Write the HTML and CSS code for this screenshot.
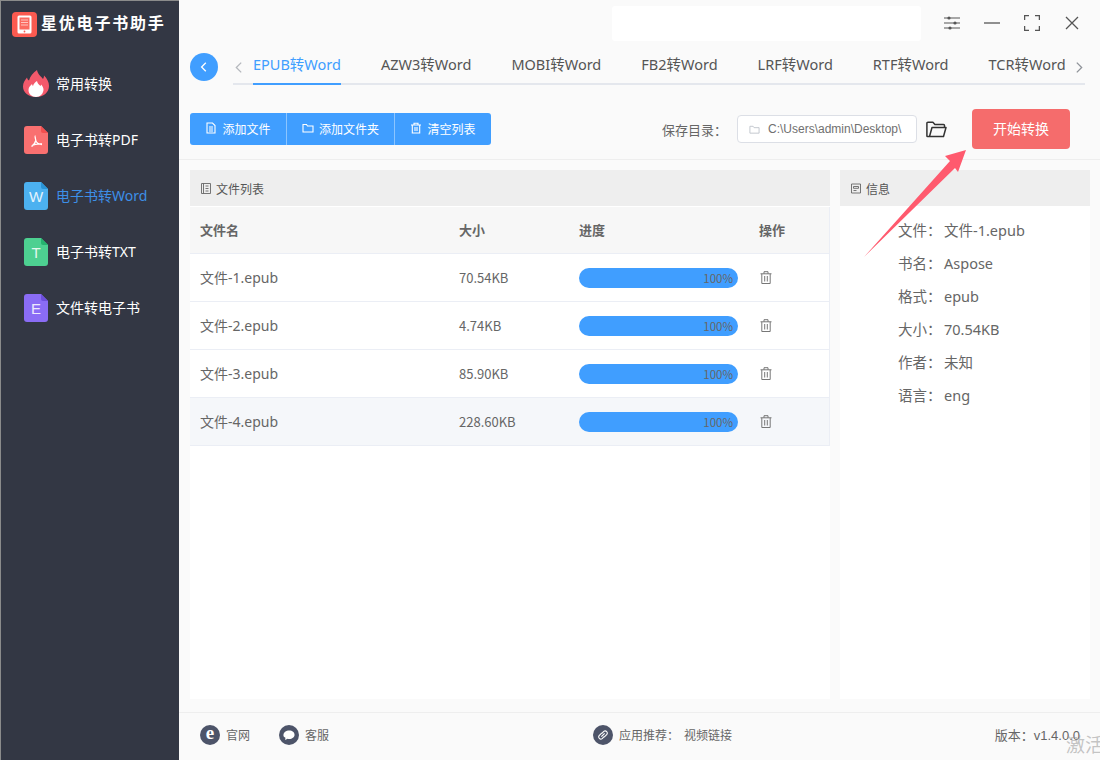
FILE: index.html
```html
<!DOCTYPE html>
<html lang="zh-CN">
  <head>
    <meta charset="UTF-8" />
    <title>星优电子书助手</title>
    <link rel="stylesheet" href="styles.css">
  </head>
  <body>
    <div class="app">
      <aside class="sidebar">
        <div class="brand">
          <svg class="brand-logo" viewBox="0 0 25 25">
            <rect width="25" height="25" rx="4" fill="#fb5a50" />
            <rect x="5.500" y="3.500" width="14" height="18" rx="1.500" fill="#fff" />
            <rect x="7.500" y="5.500" width="10" height="12" fill="#fb6a60" />
            <path d="M9 8h7M9 10.500h7M9 13h7" stroke="#ffc4bf" stroke-width="1.200" />
            <circle cx="12.500" cy="19.500" r="0.900" fill="#fb5a50" />
          </svg>
          <span class="brand-name">星优电子书助手</span>
        </div>
        <nav class="side-nav">
          <a class="side-item">
            <svg class="side-icon" viewBox="0 0 26 28">
              <path d="M14 0c1 5 4 6 6 9 .6-1 1-2 1-3.500 3 3 5 6.500 5 10.500 0 6.500-5.500 11-13 11S0 22.500 0 16.500c0-4 2-6.500 4-9 .3 1.500 1 2.500 2 3C7 6 10 3 14 0z" fill="#f4596b" />
              <path d="M14 11c.5 2.500 2 3.500 3.500 5 .4-.6.6-1 .7-1.600 1.300 1.500 2.300 3.200 2.300 5.100 0 4-3.300 7.500-7.500 7.500S5.500 24 5.500 20c0-3 2-4.500 3.500-6 .2 1 .5 1.500 1 2 .5-2 2-3.800 4-5z" fill="#fff" />
            </svg>
            <span>常用转换</span>
          </a>
          <a class="side-item">
            <span class="doc-icon">
              <svg viewBox="0 0 24 28">
                <path d="M3 0h14l7 7v18a3 3 0 0 1-3 3H3a3 3 0 0 1-3-3V3a3 3 0 0 1 3-3z" fill="#f97070" />
                <path d="M17 0l7 7h-5a2 2 0 0 1-2-2z" fill="#f24f4f" />
                <path d="M11.500 10c-.8 0 0 4 1 6 1 1.500 3 2.500 5.500 2.500M12 14c-.5 2-2 5-4.500 6.500M8 19.500c3-1.500 6-2 10-1.500" fill="none" stroke="#fff" stroke-width="1.300" />
              </svg>
            </span>
            <span>电子书转PDF</span>
          </a>
          <a class="side-item active">
            <span class="doc-icon">
              <svg viewBox="0 0 24 28">
                <path d="M3 0h14l7 7v18a3 3 0 0 1-3 3H3a3 3 0 0 1-3-3V3a3 3 0 0 1 3-3z" fill="#4cb1f0" />
                <path d="M17 0l7 7h-5a2 2 0 0 1-2-2z" fill="#2a94d6" />
              </svg>
              <span class="doc-letter">W</span>
            </span>
            <span>电子书转Word</span>
          </a>
          <a class="side-item">
            <span class="doc-icon">
              <svg viewBox="0 0 24 28">
                <path d="M3 0h14l7 7v18a3 3 0 0 1-3 3H3a3 3 0 0 1-3-3V3a3 3 0 0 1 3-3z" fill="#4dd091" />
                <path d="M17 0l7 7h-5a2 2 0 0 1-2-2z" fill="#25b36e" />
              </svg>
              <span class="doc-letter">T</span>
            </span>
            <span>电子书转TXT</span>
          </a>
          <a class="side-item">
            <span class="doc-icon">
              <svg viewBox="0 0 24 28">
                <path d="M3 0h14l7 7v18a3 3 0 0 1-3 3H3a3 3 0 0 1-3-3V3a3 3 0 0 1 3-3z" fill="#8a6cf5" />
                <path d="M17 0l7 7h-5a2 2 0 0 1-2-2z" fill="#6d4fdc" />
              </svg>
              <span class="doc-letter">E</span>
            </span>
            <span>文件转电子书</span>
          </a>
        </nav>
      </aside>

      <main class="content">
        <div class="titlebar">
          <div class="search-box"></div>
          <div class="window-btns">
            <svg viewBox="0 0 16 16"><path d="M0 3h16M0 8h16M0 13h16" stroke="#555" stroke-width="1.200" /><circle cx="5" cy="3" r="1.600" fill="#555" /><circle cx="11" cy="8" r="1.600" fill="#555" /><circle cx="6" cy="13" r="1.600" fill="#555" /></svg>
            <svg viewBox="0 0 16 16"><path d="M0 8h16" stroke="#555" stroke-width="1.300" /></svg>
            <svg viewBox="0 0 16 16"><path d="M.6 5V.6H5M11 .6h4.400V5M15.400 11v4.400H11M5 15.400H.6V11" fill="none" stroke="#555" stroke-width="1.300" /></svg>
            <svg viewBox="0 0 16 16"><path d="M2 2l12 12M14 2L2 14" stroke="#555" stroke-width="1.300" /></svg>
          </div>
        </div>

        <div class="tab-row">
          <button class="back-btn">
            <svg viewBox="0 0 10 10"><path d="M6.500 1.500L3 5l3.500 3.500" fill="none" stroke="#fff" stroke-width="1.100" /></svg>
          </button>
          <div class="tab-nav">
            <span class="tab-arrow"><svg viewBox="0 0 10 12"><path d="M7.500 1.500L3 6l4.500 4.500" fill="none" stroke="#b5b8bd" stroke-width="1.200" /></svg></span>
            <div class="tab-scroll">
              <a class="tab active">EPUB转Word</a>
              <a class="tab">AZW3转Word</a>
              <a class="tab">MOBI转Word</a>
              <a class="tab">FB2转Word</a>
              <a class="tab">LRF转Word</a>
              <a class="tab">RTF转Word</a>
              <a class="tab">TCR转Word</a>
            </div>
            <span class="tab-arrow"><svg viewBox="0 0 10 12"><path d="M2.500 1.500L7 6l-4.500 4.500" fill="none" stroke="#8f9399" stroke-width="1.200" /></svg></span>
          </div>
        </div>

        <div class="toolbar">
          <div class="btn-group">
            <button class="btn">
              <svg viewBox="0 0 12 12"><path d="M2 1h5.500L10 3.500V11H2zM4 5h4M4 7h4M4 9h4" fill="none" stroke="#fff" stroke-width="1.100" /></svg>
              添加文件
            </button>
            <button class="btn">
              <svg viewBox="0 0 12 12"><path d="M1 2.500h3.500l1 1.500H11v6H1z" fill="none" stroke="#fff" stroke-width="1.100" /></svg>
              添加文件夹
            </button>
            <button class="btn">
              <svg viewBox="0 0 12 12"><path d="M1 3h10M4 3V1.200h4V3M2.300 3v8h7.400V3M5 5v4M7 5v4" fill="none" stroke="#fff" stroke-width="1.100" /></svg>
              清空列表
            </button>
          </div>
          <div class="save-dir">
            <span class="save-label">保存目录：</span>
            <div class="path-input">
              <svg viewBox="0 0 12 12"><path d="M1 2.500h3.500l1 1.500H11v6H1z" fill="none" stroke="#c0c4cc" stroke-width="1" /></svg>
              <span>C:\Users\admin\Desktop\</span>
            </div>
            <svg class="folder-btn" viewBox="0 0 21 17"><path d="M3.500 15.500L6 6.500h14l-2.500 9H1.500a.6.6 0 0 1-.6-.6V2.200c0-.6.400-1 1-1h5l2 2.300h8.600c.6 0 1 .4 1 1v2" fill="none" stroke="#333" stroke-width="1.500" stroke-linejoin="round" /></svg>
          </div>
          <button class="start-btn">开始转换</button>
        </div>

        <div class="panels">
          <section class="panel file-panel">
            <div class="panel-head">
              <svg viewBox="0 0 10 11"><path d="M.5.5h9v10h-9zM2.500.5v10M4.500 3h3M4.500 5.500h3M4.500 8h3" fill="none" stroke="#666" stroke-width=".9" /></svg>
              文件列表
            </div>
            <div class="file-row file-head">
              <span>文件名</span><span>大小</span><span>进度</span><span>操作</span>
            </div>
            <div class="file-row">
              <span class="file-name">文件-1.epub</span><span>70.54KB</span>
              <span class="progress">100%</span>
              <svg class="trash" viewBox="0 0 12 13"><path d="M.5 2.800h11M4 2.800V.7h4v2.100M1.800 2.800v9.700h8.400V2.800M4.700 5v5.500M7.300 5v5.500" fill="none" stroke="#777" stroke-width="1" /></svg>
            </div>
            <div class="file-row">
              <span class="file-name">文件-2.epub</span><span>4.74KB</span>
              <span class="progress">100%</span>
              <svg class="trash" viewBox="0 0 12 13"><path d="M.5 2.800h11M4 2.800V.7h4v2.100M1.800 2.800v9.700h8.400V2.800M4.700 5v5.500M7.300 5v5.500" fill="none" stroke="#777" stroke-width="1" /></svg>
            </div>
            <div class="file-row">
              <span class="file-name">文件-3.epub</span><span>85.90KB</span>
              <span class="progress">100%</span>
              <svg class="trash" viewBox="0 0 12 13"><path d="M.5 2.800h11M4 2.800V.7h4v2.100M1.800 2.800v9.700h8.400V2.800M4.700 5v5.500M7.300 5v5.500" fill="none" stroke="#777" stroke-width="1" /></svg>
            </div>
            <div class="file-row current">
              <span class="file-name">文件-4.epub</span><span>228.60KB</span>
              <span class="progress">100%</span>
              <svg class="trash" viewBox="0 0 12 13"><path d="M.5 2.800h11M4 2.800V.7h4v2.100M1.800 2.800v9.700h8.400V2.800M4.700 5v5.500M7.300 5v5.500" fill="none" stroke="#777" stroke-width="1" /></svg>
            </div>
          </section>

          <section class="panel info-panel">
            <div class="panel-head">
              <svg viewBox="0 0 10 10"><path d="M.5.5h9v9h-9zM2.500 3h5v1.800h-5zM2.500 7h3" fill="none" stroke="#666" stroke-width=".9" /></svg>
              信息
            </div>
            <dl class="info-list">
              <div><dt>文件：</dt><dd>文件-1.epub</dd></div>
              <div><dt>书名：</dt><dd>Aspose</dd></div>
              <div><dt>格式：</dt><dd>epub</dd></div>
              <div><dt>大小：</dt><dd>70.54KB</dd></div>
              <div><dt>作者：</dt><dd>未知</dd></div>
              <div><dt>语言：</dt><dd>eng</dd></div>
            </dl>
          </section>
        </div>

        <footer class="footer">
          <a class="foot-link">
            <span class="foot-icon foot-ie">e</span>官网
          </a>
          <a class="foot-link">
            <span class="foot-icon"><svg viewBox="0 0 18 18"><path d="M4 9.500C4 6.500 6.300 5 9.300 5c2.700 0 4.700 1.500 4.700 3.700 0 2.400-2.200 3.800-4.700 3.800-.6 0-1.100 0-1.600-.2L5.500 13.500l.3-2C4.600 11 4 10.400 4 9.500z" fill="#fff" /></svg></span>客服
          </a>
          <div class="foot-rec">
            <span class="foot-icon"><svg viewBox="0 0 18 18"><path d="M8 7l-2.500 2.500a2 2 0 0 0 2.800 2.800L10 10.500M10 11l2.500-2.500a2 2 0 0 0-2.800-2.800L8 7.500M7.500 10.500l3-3" fill="none" stroke="#fff" stroke-width="1" /></svg></span>
            <span>应用推荐：</span>
            <span class="rec-link">视频链接</span>
          </div>
          <span class="version">版本：v1.4.0.0</span>
        </footer>
      </main>

      <svg class="callout" viewBox="0 0 1100 760">
        <path d="M966 150L945 156L950 161L864 257L955 168L958 172z" fill="#ff5a6e" />
      </svg>
      <span class="watermark">激活</span>
    </div>
  </body>
</html>
```

FILE: styles.css
```css
* {
  box-sizing: border-box;
}
html,
body {
  margin: 0;
  height: 100%;
}
body {
  font-family: "Noto Sans CJK SC", "Noto Sans", sans-serif;
  font-size: 13px;
  color: #666;
  overflow: hidden;
}
button {
  font-family: inherit;
  border: none;
  padding: 0;
  cursor: pointer;
}
.app {
  position: relative;
  display: flex;
  width: 1100px;
  height: 760px;
  overflow: hidden;
}

/* sidebar */
.sidebar {
  flex: 0 0 179px;
  background: #333744;
  border-top: 1px solid #8b8b8b;
  border-left: 1px solid #8b8b8b;
  color: #fff;
}
.brand {
  display: flex;
  align-items: center;
  height: 25px;
  margin: 11px 0 0 11px;
}
.brand-logo {
  width: 25px;
  height: 25px;
  margin-right: 4px;
}
.brand-name {
  padding-bottom: 5px;
  font-size: 16px;
  font-weight: 700;
  letter-spacing: 1.800px;
}
.side-nav {
  margin-top: 19px;
}
.side-item {
  display: flex;
  align-items: center;
  height: 56px;
  padding-left: 22px;
  font-family: "Noto Sans", "Noto Sans CJK SC", sans-serif;
  font-size: 14px;
}
.side-item > span:last-child {
  padding-bottom: 2px;
}
.side-item.active {
  color: #3d8fe8;
}
.side-icon {
  display: block;
  flex: none;
  width: 26px;
  height: 28px;
  margin-right: 7px;
}
.doc-icon {
  position: relative;
  flex: none;
  width: 24px;
  height: 28px;
  margin: 0 8px 0 1px;
}
.doc-icon svg {
  display: block;
}
.doc-letter {
  position: absolute;
  left: 0;
  right: 0;
  top: 5px;
  text-align: center;
  font-family: "Liberation Sans", sans-serif;
  font-size: 15px;
  line-height: 20px;
  color: #fff;
  opacity: 0.85;
}

/* main column */
.content {
  flex: 1;
  display: flex;
  flex-direction: column;
  background: #fafafa;
}
.titlebar {
  display: flex;
  align-items: flex-start;
  height: 53px;
  padding: 6px 20px 0 433px;
}
.search-box {
  width: 309px;
  height: 35px;
  background: #fff;
  border-radius: 3px;
}
.window-btns {
  display: flex;
  gap: 24px;
  margin: 9px 0 0 23px;
}
.window-btns svg {
  width: 16px;
  height: 16px;
}
.tab-row {
  display: flex;
  height: 32px;
  padding-left: 11px;
}
.back-btn {
  display: flex;
  align-items: center;
  justify-content: center;
  width: 28px;
  height: 28px;
  border-radius: 50%;
  background: #409eff;
}
.back-btn svg {
  width: 12px;
  height: 12px;
}
.tab-nav {
  display: flex;
  width: 852px;
  height: 32px;
  margin-left: 15px;
  border-bottom: 2px solid #e4e7ed;
}
.tab-arrow {
  flex: 0 0 20px;
  padding-top: 8px;
}
.tab-arrow svg {
  display: block;
  width: 11px;
  height: 13px;
}
.tab-nav .tab-arrow:last-child {
  padding-left: 9px;
}
.tab-scroll {
  flex: 1;
  display: flex;
  gap: 40px;
  height: 32px;
  overflow: hidden;
}
.tab {
  flex: none;
  height: 32px;
  font-family: "Noto Sans", "Noto Sans CJK SC", sans-serif;
  font-size: 14.500px;
  line-height: 22px;
  white-space: nowrap;
  color: #555;
}
.tab.active {
  color: #409eff;
  border-bottom: 2px solid #409eff;
}

/* toolbar */
.toolbar {
  display: flex;
  align-items: center;
  height: 75px;
  padding: 14px 30px 0 11px;
  border-bottom: 1px solid #eeeeee;
}
.btn-group {
  display: flex;
  height: 32px;
  border-radius: 3px;
  overflow: hidden;
}
.btn {
  display: flex;
  align-items: center;
  justify-content: center;
  gap: 5px;
  height: 32px;
  width: 97px;
  padding-bottom: 2px;
  font-size: 12px;
  color: #fff;
  background: #409eff;
  border-right: 1px solid #8cc5ff;
}
.btn:nth-child(2) {
  width: 108px;
}
.btn:last-child {
  width: 96px;
  border-right: none;
}
.btn svg {
  width: 12px;
  height: 12px;
}
.save-dir {
  display: flex;
  align-items: center;
  margin-left: auto;
}
.save-label {
  margin-right: 10px;
  font-size: 13px;
}
.path-input {
  display: flex;
  align-items: center;
  gap: 8px;
  width: 180px;
  height: 28px;
  padding-left: 11px;
  background: #fff;
  border: 1px solid #dcdfe6;
  border-radius: 4px;
  font-family: "Liberation Sans", sans-serif;
  font-size: 12px;
  white-space: nowrap;
  overflow: hidden;
  color: #707070;
}
.path-input svg {
  flex: none;
  width: 11px;
  height: 11px;
}
.folder-btn {
  width: 21px;
  height: 17px;
  margin-left: 9px;
}
.start-btn {
  width: 98px;
  height: 40px;
  margin-left: 25px;
  padding-bottom: 2px;
  font-size: 14px;
  color: #fff;
  background: #f56c6c;
  border-radius: 4px;
}

/* panels */
.panels {
  flex: 1;
  display: flex;
  gap: 10px;
  padding: 10px 10px 13px 11px;
}
.panel {
  background: #fff;
}
.file-panel {
  flex: 0 0 640px;
}
.info-panel {
  flex: 0 0 250px;
}
.panel-head {
  display: flex;
  align-items: center;
  gap: 5px;
  height: 36px;
  padding-left: 11px;
  background: #eeeeee;
  font-size: 12px;
  color: #555;
}
.panel-head svg {
  width: 10px;
  height: 11px;
}
.file-row {
  display: grid;
  grid-template-columns: 259px 120px 180px 1fr;
  align-items: center;
  height: 48px;
  padding-left: 10px;
  border-bottom: 1px solid #ebeef5;
  border-right: 1px solid #ebeef5;
}
.file-head {
  height: 47px;
  margin-top: 1px;
  padding-bottom: 2px;
  background: #f7f7f7;
  font-weight: 700;
}
.file-row.current {
  background: #f5f7fa;
}
.file-name {
  padding-bottom: 2px;
  font-family: "Noto Sans", "Noto Sans CJK SC", sans-serif;
  font-size: 14px;
}
.progress {
  display: block;
  width: 159px;
  height: 20px;
  padding-right: 5px;
  border-radius: 10px;
  background: #409eff;
  font-size: 11.500px;
  line-height: 20px;
  text-align: right;
  color: #666;
}
.trash {
  width: 12px;
  height: 13px;
  margin-left: 1px;
}
.info-list {
  margin: 7px 0 0;
  padding-left: 58px;
  font-family: "Noto Sans", "Noto Sans CJK SC", sans-serif;
  font-size: 14.500px;
}
.info-list div {
  display: flex;
  height: 33px;
  align-items: center;
}
.info-list dt {
  width: 46px;
  white-space: nowrap;
}
.info-list dd {
  margin: 0;
}

/* footer */
.footer {
  display: flex;
  align-items: center;
  height: 48px;
  padding: 0 20px 4px 21px;
  border-top: 1px solid #eeeeee;
  font-size: 12px;
}
.foot-link {
  display: flex;
  align-items: center;
  gap: 6px;
  margin-right: 29px;
}
.foot-icon {
  display: block;
  flex: none;
  width: 20px;
  height: 20px;
  border-radius: 50%;
  background: #4d5469;
  font-family: "Liberation Serif", serif;
  font-weight: 700;
  font-size: 19px;
  line-height: 16px;
  text-align: center;
  color: #fff;
}
.foot-icon svg {
  display: block;
}
.foot-rec {
  display: flex;
  align-items: center;
  gap: 5px;
  margin-left: 235px;
}
.foot-rec .foot-icon {
  margin-right: 1px;
}
.version {
  margin-left: auto;
  font-family: "Liberation Sans", "Noto Sans CJK SC", sans-serif;
  font-size: 13px;
}

/* overlays */
.callout {
  position: absolute;
  left: 0;
  top: 0;
  width: 1100px;
  height: 760px;
  pointer-events: none;
}
.watermark {
  position: absolute;
  left: 1066px;
  top: 730px;
  font-size: 19px;
  line-height: 28px;
  white-space: nowrap;
  color: rgba(150, 150, 150, 0.55);
}
```
